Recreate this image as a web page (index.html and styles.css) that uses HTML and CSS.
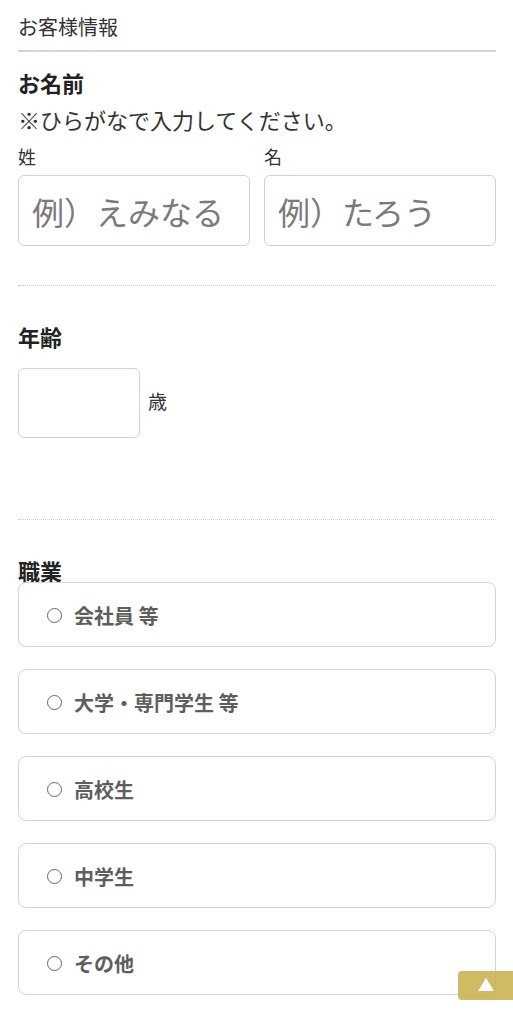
FILE: index.html
```html
<!DOCTYPE html>
<html lang="ja">
<head>
<meta charset="utf-8">
<title>お客様情報</title>
<link rel="stylesheet" href="styles.css">
</head>
<body>
<div class="page">
  <div class="section-title">お客様情報</div>

  <div class="field">
    <div class="field-label first">お名前</div>
    <div class="note">※ひらがなで入力してください。</div>
    <div class="name-row">
      <div class="name-col">
        <div class="sub-label">姓</div>
        <input class="text-input" type="text" placeholder="例）えみなる">
      </div>
      <div class="name-col">
        <div class="sub-label">名</div>
        <input class="text-input" type="text" placeholder="例）たろう">
      </div>
    </div>
  </div>

  <div class="divider"></div>

  <div class="field">
    <div class="field-label">年齢</div>
    <div class="age-row">
      <input class="text-input age-input" type="text">
      <span class="unit">歳</span>
    </div>
  </div>

  <div class="divider divider-age"></div>

  <div class="field">
    <div class="field-label">職業</div>
    <div class="options">
      <label class="option"><span class="radio"></span><span class="option-text">会社員 等</span></label>
      <label class="option"><span class="radio"></span><span class="option-text">大学・専門学生 等</span></label>
      <label class="option"><span class="radio"></span><span class="option-text">高校生</span></label>
      <label class="option"><span class="radio"></span><span class="option-text">中学生</span></label>
      <label class="option"><span class="radio"></span><span class="option-text">その他</span></label>
    </div>
  </div>
</div>

<a class="to-top" href="#">
  <svg width="16" height="13" viewBox="0 0 16 13"><polygon points="8,0 16,13 0,13" fill="#fff"/></svg>
</a>
</body>
</html>
```

FILE: styles.css
```css
* { box-sizing: border-box; }

html, body {
  margin: 0;
  padding: 0;
  background: #fff;
}

body {
  font-family: "Noto Sans CJK JP", "Noto Sans", sans-serif;
  color: #333;
}

.page {
  padding: 13px 17px 40px 18px;
}

.section-title {
  font-size: 20px;
  line-height: 28px;
  padding-bottom: 9px;
  border-bottom: 2px solid #d4d4d4;
  color: #333;
}

.field-label {
  font-size: 22px;
  line-height: 24px;
  font-weight: bold;
  color: #222;
  margin-top: 38px;
}

.field-label.first {
  margin-top: 18px;
}

.note {
  font-size: 22px;
  line-height: 30px;
  margin-top: 10px;
  color: #333;
}

.name-row {
  display: flex;
  gap: 14px;
  margin-top: 10px;
}

.name-col {
  flex: 1;
  min-width: 0;
}

.sub-label {
  font-size: 18px;
  line-height: 24px;
  margin-bottom: 7px;
  color: #333;
}

.text-input {
  display: block;
  width: 100%;
  height: 71px;
  border: 1.5px solid #d2d2d2;
  border-radius: 6px;
  padding: 0 13px;
  font-family: "Noto Sans CJK JP", "Noto Sans", sans-serif;
  font-size: 32px;
  color: #333;
  background: #fff;
  outline: none;
}

.text-input::placeholder {
  color: #7a7a7a;
}

.divider {
  border-top: 1px dotted #c8c8c8;
  margin-top: 39px;
}

.divider.divider-age {
  margin-top: 81px;
}

.age-row {
  display: flex;
  align-items: center;
  gap: 8px;
  margin-top: 20px;
}

.age-input {
  width: 122px;
  height: 70px;
}

.unit {
  font-size: 19px;
  color: #333;
  margin-top: -6px;
}

.options {
  display: flex;
  flex-direction: column;
  gap: 22px;
}

.option {
  display: flex;
  align-items: center;
  height: 65px;
  border: 1.5px solid #d4d4d4;
  border-radius: 8px;
  padding-left: 28px;
  padding-top: 2px;
}

.radio {
  width: 15px;
  height: 15px;
  border: 1px solid #666;
  border-radius: 50%;
  margin-right: 12px;
  flex: none;
}

.option-text {
  font-size: 20px;
  font-weight: bold;
  color: #5e5e5e;
}

.to-top {
  position: fixed;
  right: 0;
  bottom: 24px;
  width: 55px;
  height: 29px;
  background: rgba(200, 174, 72, 0.85);
  border-radius: 4px 0 0 4px;
  display: flex;
  align-items: center;
  justify-content: center;
}

.to-top svg {
  display: block;
  margin-top: -2px;
}
```
